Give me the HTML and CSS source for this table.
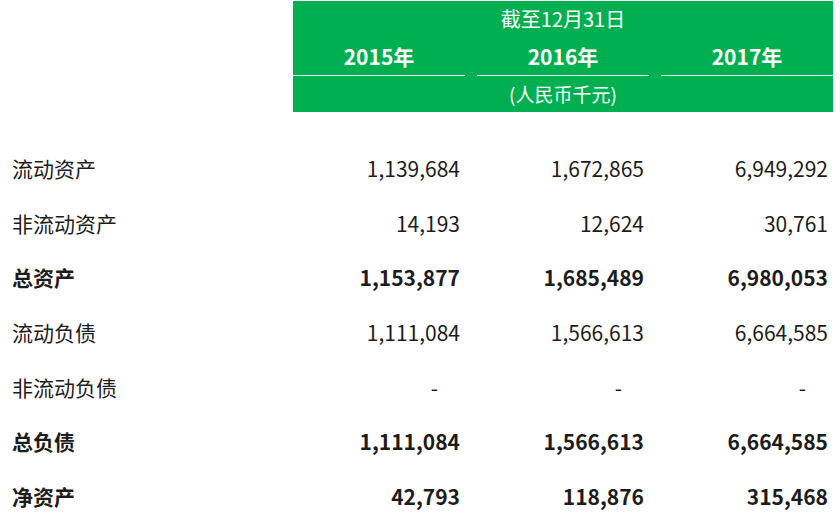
FILE: index.html
```html
<!DOCTYPE html>
<html lang="zh-CN">
<head>
<meta charset="utf-8">
<title>资产负债</title>
<link rel="stylesheet" href="styles.css">
</head>
<body>
<div class="sheet">
  <div class="head">
    <div class="title">截至12月31日</div>
    <div class="years">
      <div class="year">2015年</div>
      <div class="year">2016年</div>
      <div class="year">2017年</div>
    </div>
    <div class="unit">(人民币千元)</div>
  </div>
  <div class="rows">
    <div class="row"><div class="label">流动资产</div><div class="num">1,139,684</div><div class="num">1,672,865</div><div class="num">6,949,292</div></div>
    <div class="row"><div class="label">非流动资产</div><div class="num">14,193</div><div class="num">12,624</div><div class="num">30,761</div></div>
    <div class="row bold"><div class="label">总资产</div><div class="num">1,153,877</div><div class="num">1,685,489</div><div class="num">6,980,053</div></div>
    <div class="row"><div class="label">流动负债</div><div class="num">1,111,084</div><div class="num">1,566,613</div><div class="num">6,664,585</div></div>
    <div class="row"><div class="label">非流动负债</div><div class="num dash">-</div><div class="num dash">-</div><div class="num dash">-</div></div>
    <div class="row bold"><div class="label">总负债</div><div class="num">1,111,084</div><div class="num">1,566,613</div><div class="num">6,664,585</div></div>
    <div class="row bold"><div class="label">净资产</div><div class="num">42,793</div><div class="num">118,876</div><div class="num">315,468</div></div>
  </div>
</div>
</body>
</html>
```
FILE: styles.css
```css
html, body {
  margin: 0;
  padding: 0;
  background: #ffffff;
}
body {
  font-family: "Noto Sans CJK SC", "Noto Sans", sans-serif;
  color: #1c1c1c;
  width: 840px;
  height: 527px;
  overflow: hidden;
}
.sheet {
  padding-top: 1px;
}
.head {
  margin-left: 293px;
  width: 540px;
  background: #00b050;
  color: #ffffff;
}
.title {
  height: 36px;
  line-height: 36px;
  text-align: center;
  font-size: 20px;
}
.years {
  display: grid;
  grid-template-columns: repeat(3, 172px);
  column-gap: 12px;
}
.year {
  height: 38px;
  line-height: 38px;
  text-align: center;
  font-size: 21px;
  font-weight: 700;
  border-bottom: 1px solid #e8f7ee;
}
.unit {
  height: 36px;
  line-height: 36px;
  text-align: center;
  font-size: 19px;
}
.rows {
  margin-top: 28.67px;
}
.row {
  display: grid;
  grid-template-columns: 281px repeat(3, 172px);
  column-gap: 12px;
  height: 54.67px;
  align-items: center;
  font-size: 21px;
}
.label {
  padding-left: 12px;
}
.num {
  text-align: right;
  padding-right: 5px;
}
.dash {
  padding-right: 27px;
}
.bold {
  font-weight: 700;
}
```
